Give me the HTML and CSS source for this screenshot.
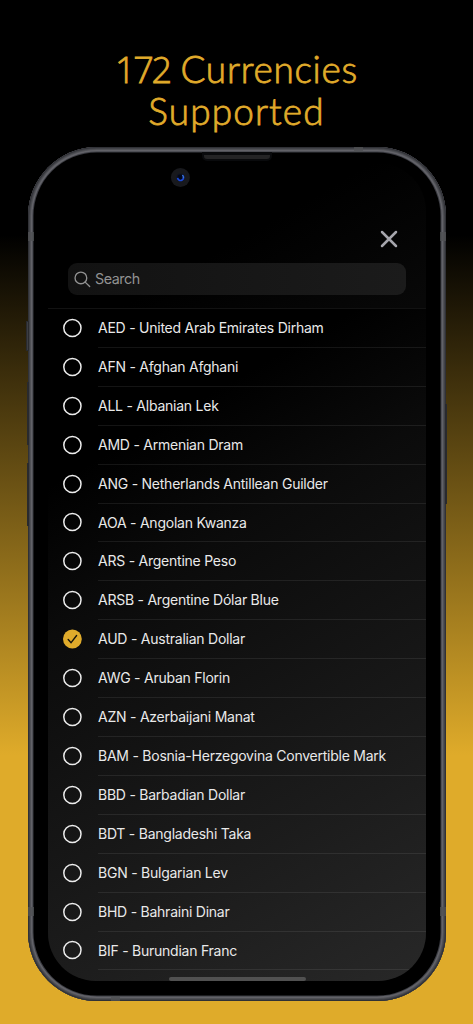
FILE: index.html
```html
<!DOCTYPE html>
<html lang="en">
<head>
<meta charset="utf-8">
<title>172 Currencies Supported</title>
<link rel="stylesheet" href="styles.css">
</head>
<body>
<main class="poster">
  <h1 class="headline"><span class="line-one"><span class="count">172</span> Currencies</span><span class="line-two">Supported</span></h1>
  <div class="phone">
    <i class="button mute"></i><i class="button volume-up"></i><i class="button volume-down"></i><i class="button power"></i>
    <i class="band band-top"></i><i class="band band-bottom"></i><i class="band band-lt"></i><i class="band band-rt"></i><i class="band band-lb"></i><i class="band band-rb"></i>
    <i class="speaker"></i>
    <svg class="camera" viewBox="0 0 20 20"><circle cx="10.4" cy="10.5" r="9.5" fill="#18191d"/><circle cx="10.4" cy="10.5" r="4" fill="#101522"/><circle cx="10.4" cy="10.5" r="2.9" fill="#03071a"/><path d="M12.4 8.1A3 3 0 1 1 7.6 10.9" fill="none" stroke="#1a48d8" stroke-width="1.7"/><path d="M12.4 8.1a3 3 0 0 1 .9 3" fill="none" stroke="#4581c9" stroke-width="1"/></svg>
    <section class="screen">
      <div class="toolbar"><svg class="close" viewBox="0 0 18 18"><path d="M2 2l14 14M16 2L2 16"/></svg></div>
      <div class="search"><svg viewBox="0 0 18 18"><circle cx="7.3" cy="7.3" r="6.2"/><path d="M11.8 11.8l4.8 4.7"/></svg><span>Search</span></div>
      <ul class="list" id="list"></ul>
      <i class="home"></i>
    </section>
  </div>
</main>
<script src="list.js"></script>
</body>
</html>
```
FILE: list.js
```js
const currencies = [
  ["AED", "United Arab Emirates Dirham"],
  ["AFN", "Afghan Afghani"],
  ["ALL", "Albanian Lek"],
  ["AMD", "Armenian Dram"],
  ["ANG", "Netherlands Antillean Guilder"],
  ["AOA", "Angolan Kwanza"],
  ["ARS", "Argentine Peso"],
  ["ARSB", "Argentine Dólar Blue"],
  ["AUD", "Australian Dollar"],
  ["AWG", "Aruban Florin"],
  ["AZN", "Azerbaijani Manat"],
  ["BAM", "Bosnia-Herzegovina Convertible Mark"],
  ["BBD", "Barbadian Dollar"],
  ["BDT", "Bangladeshi Taka"],
  ["BGN", "Bulgarian Lev"],
  ["BHD", "Bahraini Dinar"],
  ["BIF", "Burundian Franc"]
];
const selected = "AUD";
const empty = '<svg class="radio" viewBox="0 0 20 20"><circle cx="10.4" cy="10" r="8.6" fill="none" stroke="#ececec" stroke-width="1.5"/></svg>';
const checked = '<svg class="radio" viewBox="0 0 20 20"><circle cx="10.4" cy="10" r="9.4" fill="#e0ab2b"/><path d="M6.2 10.6l2.9 3.1 5.5-7.2" fill="none" stroke="#18150c" stroke-width="1.4" stroke-linecap="round" stroke-linejoin="round"/></svg>';
document.getElementById("list").innerHTML = currencies.map(([code, name]) =>
  `<li class="row">${code === selected ? checked : empty}<span class="label">${code} - ${name}</span></li>`
).join("");
```
FILE: styles.css
```css
* { box-sizing: border-box; }
body { margin: 0; background: #000; }
.poster {
  width: 473px;
  height: 1024px;
  overflow: hidden;
  padding-top: 48px;
  background: linear-gradient(#000 235px, #dfab2a 755px);
}
.headline {
  margin: 0;
  height: 99px;
  display: flex;
  flex-direction: column;
  align-items: center;
  font: 300 37px/41.5px Lato, sans-serif;
  color: #e0ab2b;
  -webkit-text-stroke: 0.8px #e0ab2b;
  white-space: nowrap;
}
.line-one { letter-spacing: 0.7px; }
.count { font: 300 36px/41px "Open Sans", sans-serif; letter-spacing: -2.3px; }
.line-two { letter-spacing: 1.1px; }
.phone {
  position: relative;
  width: 418px;
  height: 854px;
  margin-left: 28px;
  padding: 16px 20px 20px;
  border-radius: 69px;
  background: #000;
  box-shadow: inset 0 0 0 1px #303136, inset 0 0 0 2px #414247, inset 0 0 0 3px #505156, inset 0 0 0 4.5px #626268, inset 0 0 0 5.5px #3b3c42;
}
.screen {
  position: relative;
  display: flex;
  flex-direction: column;
  height: 818px;
  border-radius: 48px;
  overflow: hidden;
  background: linear-gradient(150deg, #000 18%, #080808 34%);
}
.toolbar {
  height: 100px;
  display: flex;
  justify-content: flex-end;
  align-items: flex-end;
  padding: 0 28px 15px 0;
}
.close { width: 18px; height: 18px; fill: none; stroke: #a5a5ac; stroke-width: 2.5; stroke-linecap: round; }
.search {
  height: 32px;
  margin: 0 20px 13px;
  display: flex;
  align-items: center;
  gap: 4px;
  padding-left: 6px;
  border-radius: 9px;
  background: linear-gradient(90deg, #121212, #1b1b1b);
  font: 14.3px/20px Inter, sans-serif;
  letter-spacing: -0.45px;
  color: #929292;
}
.search svg { width: 17px; height: 17px; fill: none; stroke: #929292; stroke-width: 1.4; stroke-linecap: round; }
.list {
  flex: 1;
  list-style: none;
  margin: 0;
  padding: 0;
  border-top: 1px solid #121212;
  background: linear-gradient(150deg, #000 20%, #0b0b0b 37%, #1c1c1c 75%, #282828);
}
.row { display: flex; height: 38.92px; align-items: center; padding-left: 14px; }
.radio { width: 20px; height: 20px; flex: none; margin: -1px 16px 0 0; }
.label {
  flex: 1;
  height: 100%;
  border-bottom: 1px solid rgba(255, 255, 255, 0.08);
  font: 14px/38px Inter, sans-serif;
  letter-spacing: -0.24px;
  color: #e9e9e9;
  white-space: nowrap;
}
.home { position: absolute; left: 121px; bottom: 0; width: 137px; height: 4px; border-radius: 2px; background: #515151; }
.speaker { position: absolute; left: 174px; top: 5px; width: 70px; height: 9px; border: 2px solid #090a0c; border-top-width: 3px; border-radius: 0 0 5px 5px; background: #242425; }
.camera { position: absolute; z-index: 1; left: 142px; top: 20px; width: 20px; height: 20px; }
.button { position: absolute; background: #3c3d42; border: 1px solid #292a2e; }
.mute { left: -2px; top: 174px; height: 30px; width: 3px; }
.volume-up { left: -1px; top: 235px; height: 63px; width: 2px; }
.volume-down { left: -1px; top: 316px; height: 63px; width: 2px; }
.power { right: -1px; top: 257px; height: 100px; width: 2px; }
.band { position: absolute; background: #505154; opacity: 0.8; }
.band-top { left: 326px; top: 0; width: 9px; height: 5px; }
.band-bottom { left: 83px; bottom: 0; width: 9px; height: 5px; }
.band-lt { left: 0; top: 85px; width: 6px; height: 9px; }
.band-rt { right: 0; top: 85px; width: 6px; height: 9px; }
.band-lb { left: 0; top: 760px; width: 6px; height: 9px; }
.band-rb { right: 0; top: 760px; width: 6px; height: 9px; }
```
